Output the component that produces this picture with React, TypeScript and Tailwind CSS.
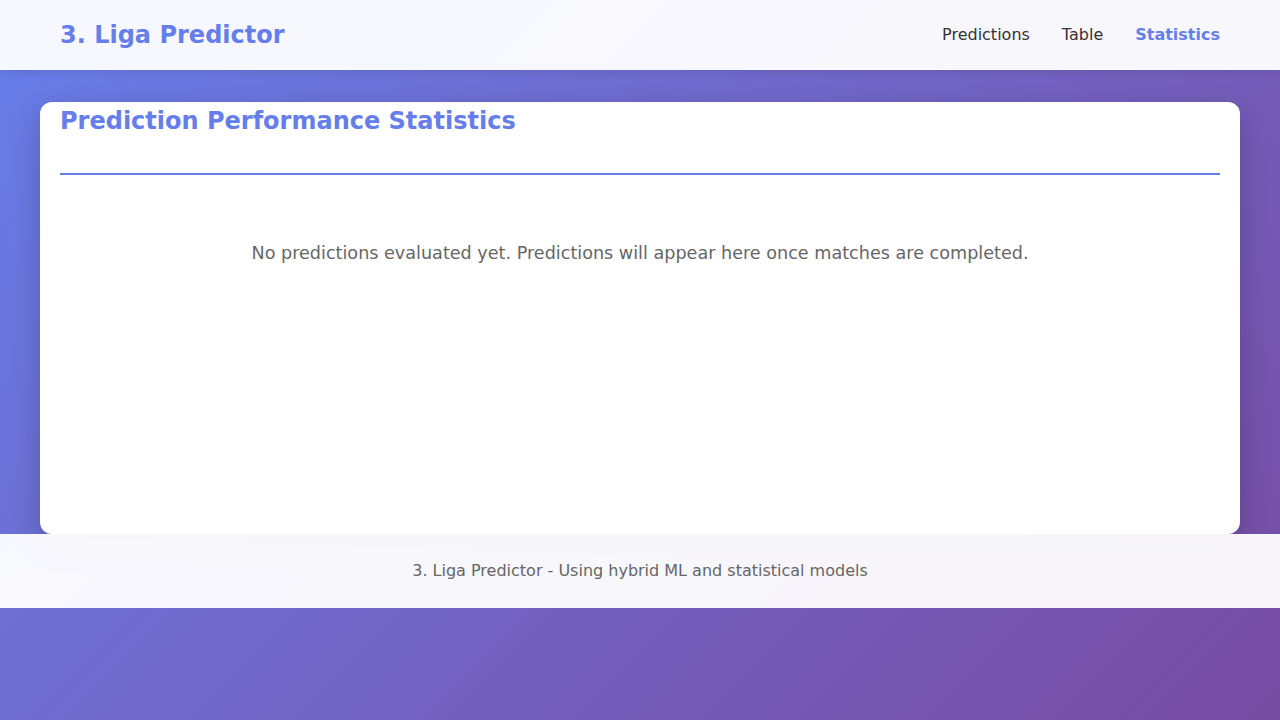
const navItems = ["Predictions", "Table", "Statistics"];

const App = () => {
    const active = "Statistics";

    return (
        <div className="min-h-screen bg-linear-135 from-[#667eea] to-[#764ba2] font-['DejaVu_Sans',sans-serif] text-[#333]">
            <header className="h-[70px] bg-white/95 shadow-[0_2px_10px_rgba(0,0,0,0.1)]">
                <div className="h-full px-[60px] flex items-center justify-between">
                    <h1 className="text-[24px] font-bold text-[#667eea]">3. Liga Predictor</h1>
                    <nav className="flex items-center gap-8">
                        {navItems.map((item) => (
                            <a
                                key={item}
                                href="#"
                                className={`text-[16px] ${
                                    item === active ? "font-bold text-[#667eea]" : "text-[#333]"
                                }`}
                            >
                                {item}
                            </a>
                        ))}
                    </nav>
                </div>
            </header>

            <main className="px-10 pt-8">
                <section className="min-h-[432px] bg-white rounded-[12px] px-5 pt-[1px] shadow-[0_10px_30px_rgba(0,0,0,0.2)]">
                    <h2 className="text-[24px] font-bold text-[#667eea] pb-[34px] border-b-2 border-[#667eea]">
                        Prediction Performance Statistics
                    </h2>
                    <p className="pt-[65px] text-center text-[17.6px] text-[#666]">
                        No predictions evaluated yet. Predictions will appear here once matches are completed.
                    </p>
                </section>
            </main>

            <footer className="h-[74px] bg-white/95 flex items-center justify-center">
                <p className="text-[16px] text-[#666]">3. Liga Predictor - Using hybrid ML and statistical models</p>
            </footer>
        </div>
    );
};

export default App;
